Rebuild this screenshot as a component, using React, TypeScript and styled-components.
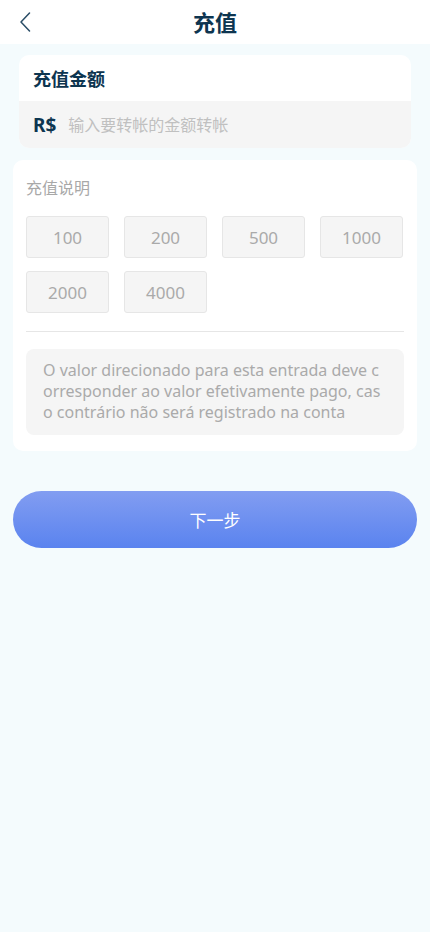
import React from 'react'
import styled, { createGlobalStyle } from 'styled-components'

const GlobalStyle = createGlobalStyle`
  * { box-sizing: border-box; }
  html, body {
    margin: 0;
    padding: 0;
    background: #f4fbfd;
    font-family: "Noto Sans", "Noto Sans CJK SC", sans-serif;
  }
`

const Page = styled.main`
  width: 430px;
  min-height: 932px;
  background: #f4fbfd;
  display: flex;
  flex-direction: column;
`

const Header = styled.header`
  height: 44px;
  background: #fff;
  display: grid;
  grid-template-columns: 60px 1fr 60px;
  align-items: center;
`

const BackButton = styled.button`
  border: none;
  background: none;
  padding: 0 0 0 19px;
  height: 44px;
  display: flex;
  align-items: center;
  cursor: pointer;
`

const HeaderTitle = styled.h1`
  margin: 0;
  text-align: center;
  font-size: 22px;
  font-weight: 700;
  color: #0d3550;
  line-height: 44px;
`

const Content = styled.div`
  display: flex;
  flex-direction: column;
  padding: 11px 13px 0;
`

const AmountCard = styled.section`
  margin: 0 6px;
  background: #fff;
  border-radius: 10px;
  overflow: hidden;
`

const CardTitle = styled.h2`
  margin: 0;
  height: 46px;
  padding: 0 14px;
  display: flex;
  align-items: center;
  font-size: 18px;
  font-weight: 700;
  color: #0d3550;
`

const InputRow = styled.label`
  height: 47px;
  background: #f5f5f5;
  display: flex;
  align-items: center;
  gap: 12px;
  padding: 0 14px;
`

const Currency = styled.span`
  font-size: 19px;
  font-weight: 700;
  color: #0d3550;
`

const AmountInput = styled.input`
  flex: 1;
  border: none;
  outline: none;
  background: transparent;
  font-family: inherit;
  font-size: 16px;
  color: #333;
  padding: 0;
  &::placeholder { color: #c0c0c0; }
`

const InfoCard = styled.section`
  margin-top: 12px;
  background: #fff;
  border-radius: 10px;
  padding: 16px 13px 16px;
`

const InfoLabel = styled.div`
  font-size: 16px;
  color: #a8a8a8;
  line-height: 24px;
`

const AmountGrid = styled.div`
  margin-top: 16px;
  display: grid;
  grid-template-columns: repeat(4, 83px);
  column-gap: 15px;
  row-gap: 13px;
`

const AmountOption = styled.button<{ $active?: boolean }>`
  height: 42px;
  border: 1px solid ${p => (p.$active ? '#5580ee' : '#e6e6e6')};
  border-radius: 3px;
  background: #f5f5f5;
  font-family: inherit;
  font-size: 17px;
  color: ${p => (p.$active ? '#5580ee' : '#aaa')};
  cursor: pointer;
  padding: 0;
`

const Divider = styled.hr`
  margin: 18px 0 17px;
  border: none;
  border-top: 1px solid #e6e6e6;
`

const Note = styled.p`
  margin: 0;
  background: #f5f5f5;
  border-radius: 8px;
  padding: 11px 17px 12px;
  font-size: 16px;
  line-height: 21px;
  color: #aaa;
  word-break: break-all;
`

const NextButton = styled.button`
  margin-top: 40px;
  height: 57px;
  border: none;
  border-radius: 29px;
  background: linear-gradient(180deg, #829df1 0%, #5a83ef 100%);
  color: #fff;
  font-family: inherit;
  font-size: 17px;
  cursor: pointer;
`

const amounts = [100, 200, 500, 1000, 2000, 4000]

const App = () => {
  const [value, setValue] = React.useState('')
  const [picked, setPicked] = React.useState<number | null>(null)

  function pick(n: number) {
    setPicked(n)
    setValue(String(n))
  }

  return (
    <>
      <GlobalStyle />
      <Page>
        <Header>
          <BackButton aria-label="back">
            <svg width="12" height="20" viewBox="0 0 12 20" fill="none">
              <path d="M10.5 1L2 10l8.5 9" stroke="#2a4d66" strokeWidth="1.5" strokeLinecap="round" strokeLinejoin="round" />
            </svg>
          </BackButton>
          <HeaderTitle>充值</HeaderTitle>
          <span />
        </Header>

        <Content>
          <AmountCard>
            <CardTitle>充值金额</CardTitle>
            <InputRow>
              <Currency>R$</Currency>
              <AmountInput
                value={value}
                onChange={e => { setValue(e.target.value); setPicked(null) }}
                placeholder="输入要转帐的金额转帐"
              />
            </InputRow>
          </AmountCard>

          <InfoCard>
            <InfoLabel>充值说明</InfoLabel>
            <AmountGrid>
              {amounts.map(n => (
                <AmountOption key={n} $active={picked === n} onClick={() => pick(n)}>
                  {n}
                </AmountOption>
              ))}
            </AmountGrid>
            <Divider />
            <Note>
              O valor direcionado para esta entrada deve corresponder ao valor efetivamente pago, caso contrário não será registrado na conta
            </Note>
          </InfoCard>

          <NextButton>下一步</NextButton>
        </Content>
      </Page>
    </>
  )
}

export default App
